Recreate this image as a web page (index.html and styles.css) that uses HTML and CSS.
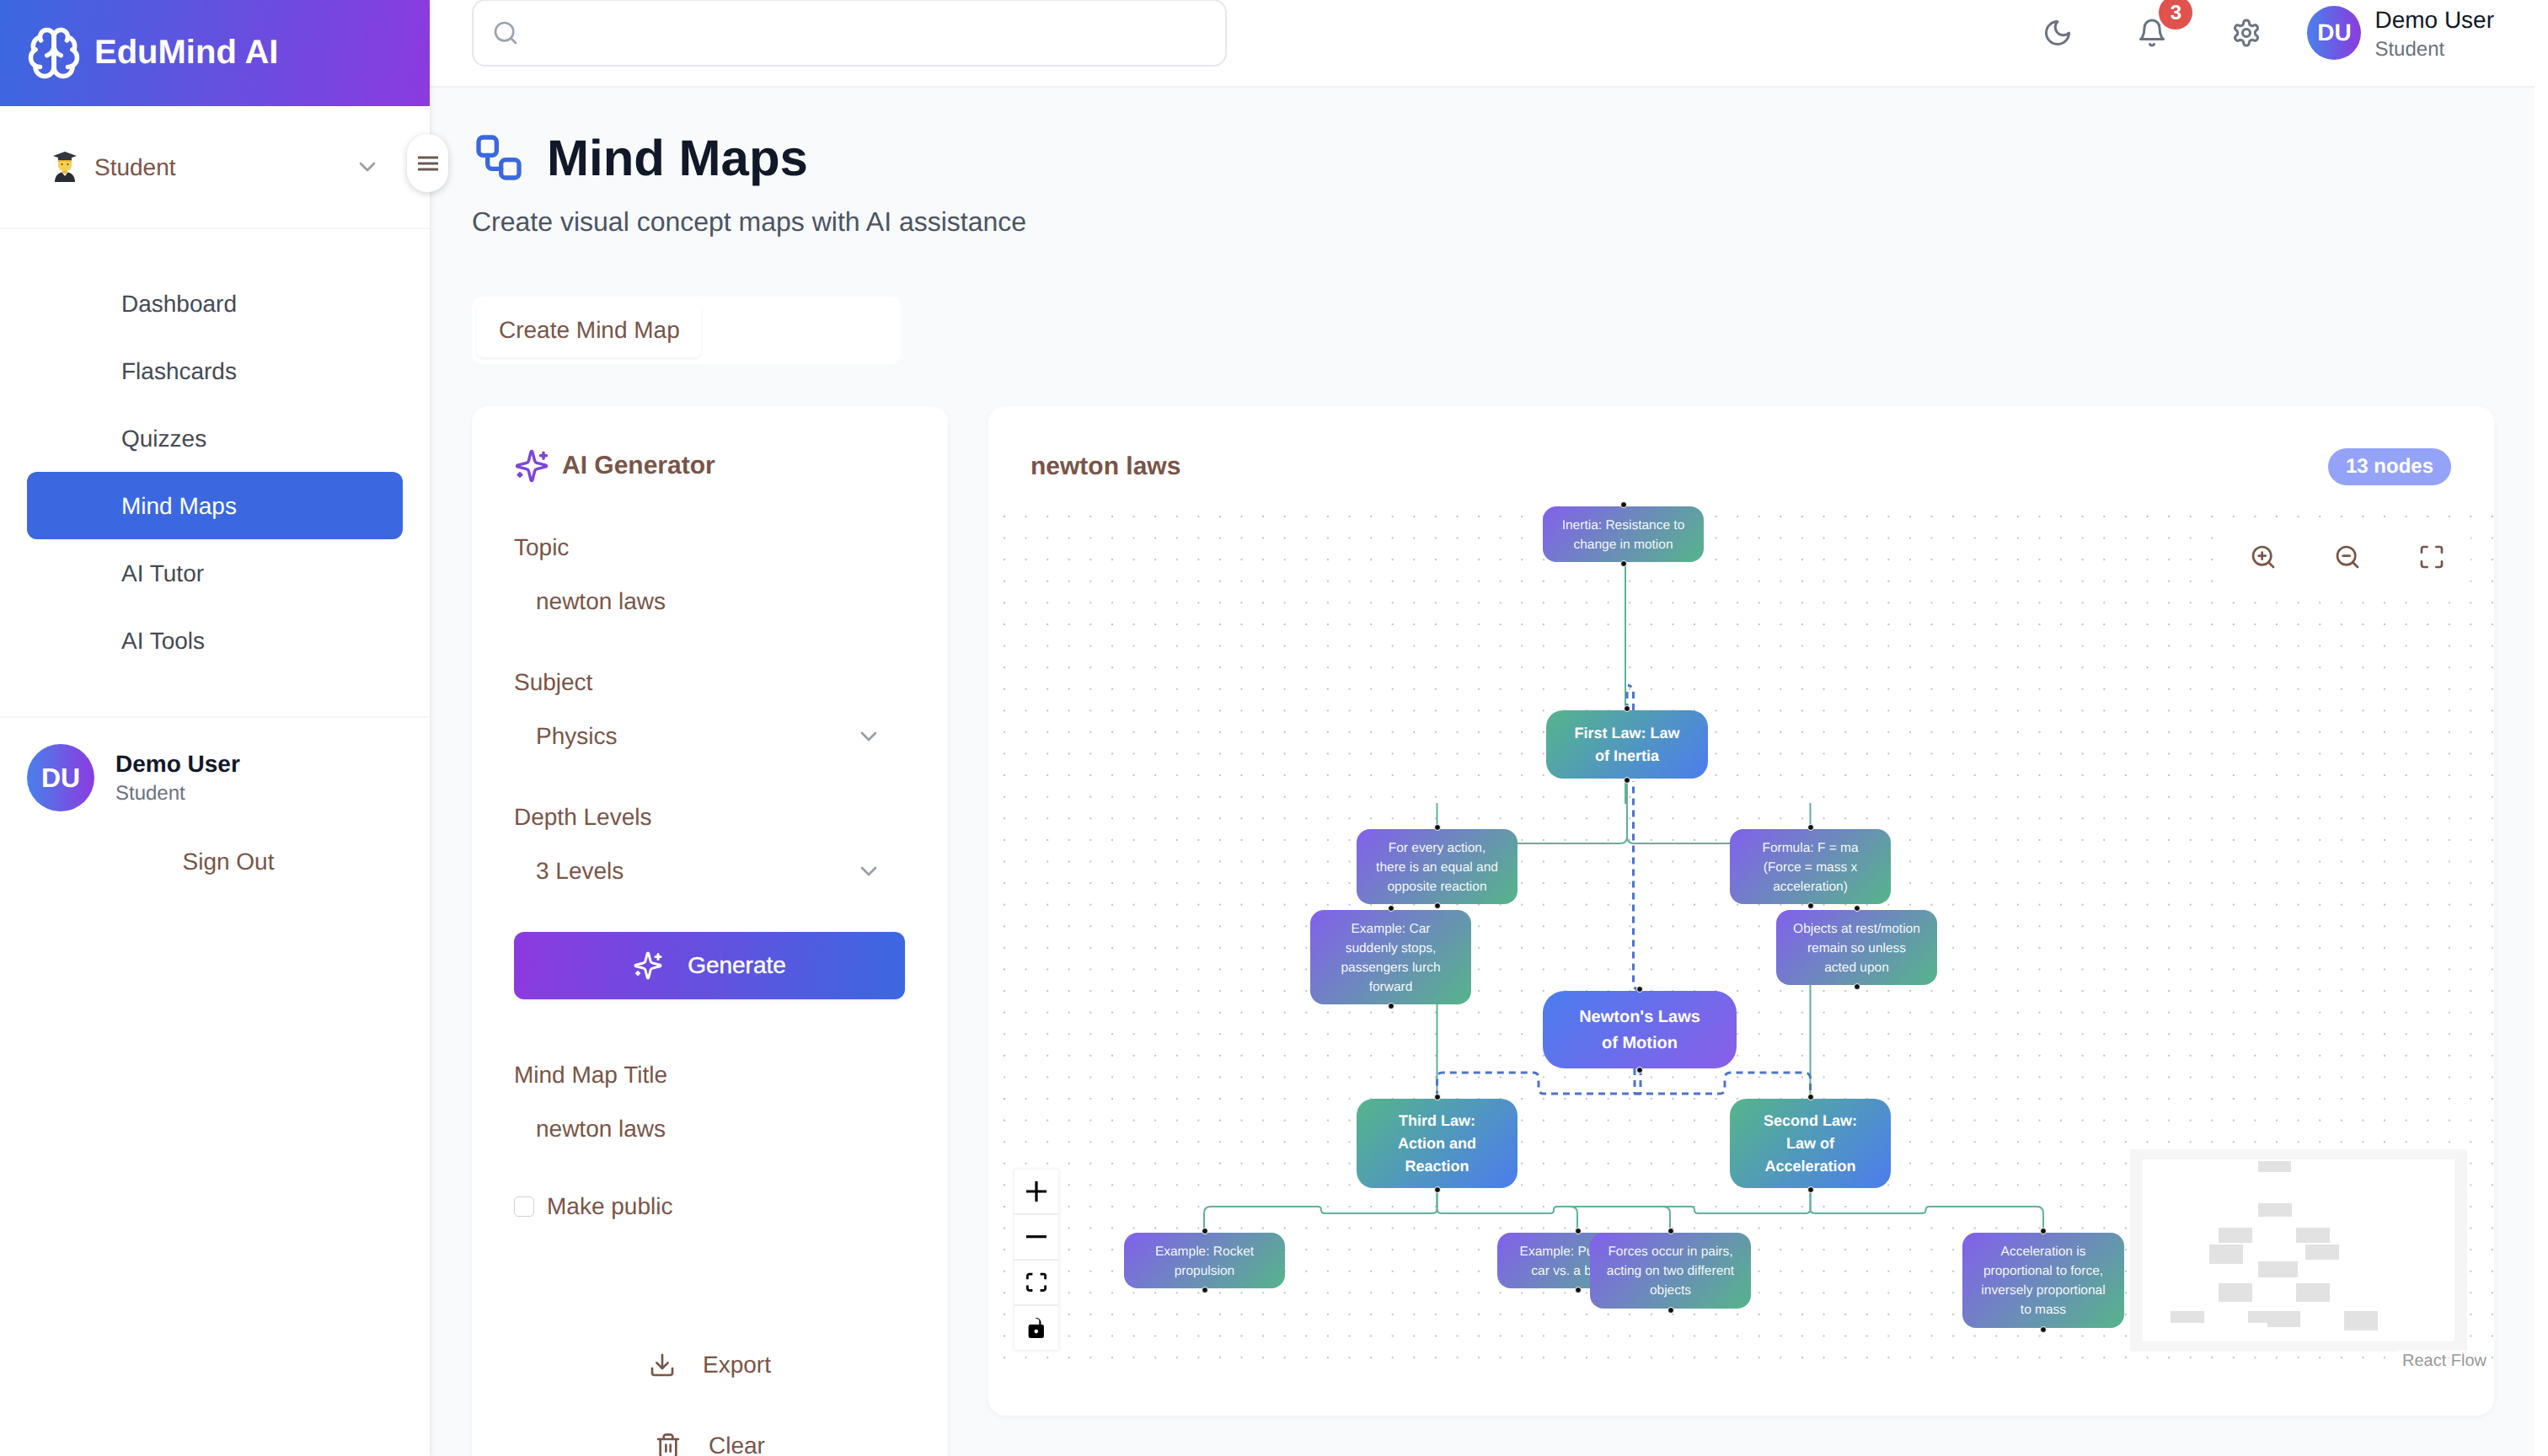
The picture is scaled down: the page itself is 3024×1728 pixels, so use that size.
FILE: index.html
```html
<!DOCTYPE html>
<html lang="en">
<head>
    <meta charset="UTF-8" />
    <title>EduMind AI – Mind Maps</title>
    <link rel="stylesheet" href="styles.css">
</head>
<body>

<svg class="sprite" width="0" height="0">
    <symbol id="i-chevron" viewBox="0 0 24 24"><path d="m6 9 6 6 6-6"/></symbol>
    <symbol id="i-sparkles" viewBox="0 0 24 24">
        <path d="M9.937 15.5A2 2 0 0 0 8.5 14.063l-6.135-1.582a.5.5 0 0 1 0-.962L8.5 9.936A2 2 0 0 0 9.937 8.5l1.582-6.135a.5.5 0 0 1 .963 0L14.063 8.5A2 2 0 0 0 15.5 9.937l6.135 1.581a.5.5 0 0 1 0 .964L15.5 14.063a2 2 0 0 0-1.437 1.437l-1.582 6.135a.5.5 0 0 1-.963 0z"/>
        <path d="M20 3v4"/><path d="M22 5h-4"/><path d="M4 17v2"/><path d="M5 18H3"/>
    </symbol>
    <symbol id="i-maximize" viewBox="0 0 24 24">
        <path d="M8 3H5a2 2 0 0 0-2 2v3"/><path d="M21 8V5a2 2 0 0 0-2-2h-3"/><path d="M3 16v3a2 2 0 0 0 2 2h3"/><path d="M16 21h3a2 2 0 0 0 2-2v-3"/>
    </symbol>
</svg>

<div class="app">
    <aside class="sidebar">
        <div class="brand">
            <svg class="icon brand-icon" viewBox="0 0 24 24">
                <path d="M12 5a3 3 0 1 0-5.997.125 4 4 0 0 0-2.526 5.77 4 4 0 0 0 .556 6.588A4 4 0 1 0 12 18Z"/>
                <path d="M12 5a3 3 0 1 1 5.997.125 4 4 0 0 1 2.526 5.77 4 4 0 0 1-.556 6.588A4 4 0 1 1 12 18Z"/>
                <path d="M15 13a4.5 4.5 0 0 1-3-4 4.5 4.5 0 0 1-3 4"/>
                <path d="M17.599 6.5a3 3 0 0 0 .399-1.375"/><path d="M6.003 5.125A3 3 0 0 0 6.401 6.5"/>
                <path d="M3.477 10.896a4 4 0 0 1 .585-.396"/><path d="M19.938 10.5a4 4 0 0 1 .585.396"/>
                <path d="M6 18a4 4 0 0 1-1.967-.516"/><path d="M19.967 17.484A4 4 0 0 1 18 18"/>
            </svg>
            <span class="brand-name">EduMind AI</span>
        </div>

        <div class="role-row">
            <svg class="role-emoji" viewBox="0 0 30 36">
                <path d="M3 36c0-8 5-12 12-12s12 4 12 12z" fill="#2a2d33"/>
                <path d="M11 24l4 5 4-5z" fill="#f4f4f4"/>
                <rect x="12" y="19" width="6" height="7" fill="#eeb53f"/>
                <path d="M7 9h16v7c0 5-4 7-8 7s-8-2-8-7z" fill="#f8cf55"/>
                <path d="M7 12c0-2 0-4 1-5h14c1 1 1 3 1 5-3-1-13-1-16 0z" fill="#e2a92e"/>
                <path d="M15 0 29 5 15 10 1 5z" fill="#33363d"/>
                <path d="M7 6h16v4H7z" fill="#33363d"/>
                <circle cx="11.5" cy="15" r="1" fill="#4a3520"/><circle cx="18.5" cy="15" r="1" fill="#4a3520"/>
            </svg>
            <span class="role-name">Student</span>
            <svg class="icon chevron role-chevron"><use href="#i-chevron"/></svg>
        </div>

        <button class="sidebar-toggle">
            <svg class="toggle-lines" viewBox="0 0 24 18"><path d="M0 2h24M0 9h24M0 16h24"/></svg>
        </button>

        <nav class="nav">
            <a class="nav-item">Dashboard</a>
            <a class="nav-item">Flashcards</a>
            <a class="nav-item">Quizzes</a>
            <a class="nav-item active">Mind Maps</a>
            <a class="nav-item">AI Tutor</a>
            <a class="nav-item">AI Tools</a>
        </nav>

        <div class="side-user">
            <div class="side-user-row">
                <div class="avatar avatar-lg">DU</div>
                <div>
                    <div class="side-user-name">Demo User</div>
                    <div class="side-user-role">Student</div>
                </div>
            </div>
            <div class="sign-out">Sign Out</div>
        </div>
    </aside>

    <div class="main">
        <header class="topbar">
            <div class="search">
                <svg class="icon search-icon" viewBox="0 0 24 24"><circle cx="11" cy="11" r="8"/><path d="m21 21-4.3-4.3"/></svg>
            </div>
            <div class="top-actions">
                <button class="top-btn">
                    <svg class="icon" viewBox="0 0 24 24"><path d="M12 3a6 6 0 0 0 9 9 9 9 0 1 1-9-9Z"/></svg>
                </button>
                <button class="top-btn">
                    <svg class="icon" viewBox="0 0 24 24"><path d="M6 8a6 6 0 0 1 12 0c0 7 3 9 3 9H3s3-2 3-9"/><path d="M10.3 21a1.94 1.94 0 0 0 3.4 0"/></svg>
                    <span class="badge">3</span>
                </button>
                <button class="top-btn">
                    <svg class="icon" viewBox="0 0 24 24"><path d="M12.22 2h-.44a2 2 0 0 0-2 2v.18a2 2 0 0 1-1 1.73l-.43.25a2 2 0 0 1-2 0l-.15-.08a2 2 0 0 0-2.73.73l-.22.38a2 2 0 0 0 .73 2.73l.15.1a2 2 0 0 1 1 1.72v.51a2 2 0 0 1-1 1.74l-.15.09a2 2 0 0 0-.73 2.73l.22.38a2 2 0 0 0 2.73.73l.15-.08a2 2 0 0 1 2 0l.43.25a2 2 0 0 1 1 1.73V20a2 2 0 0 0 2 2h.44a2 2 0 0 0 2-2v-.18a2 2 0 0 1 1-1.73l.43-.25a2 2 0 0 1 2 0l.15.08a2 2 0 0 0 2.73-.73l.22-.39a2 2 0 0 0-.73-2.73l-.15-.08a2 2 0 0 1-1-1.74v-.5a2 2 0 0 1 1-1.74l.15-.09a2 2 0 0 0 .73-2.73l-.22-.38a2 2 0 0 0-2.73-.73l-.15.08a2 2 0 0 1-2 0l-.43-.25a2 2 0 0 1-1-1.73V4a2 2 0 0 0-2-2z"/><circle cx="12" cy="12" r="3"/></svg>
                </button>
                <div class="top-user">
                    <div class="avatar avatar-md">DU</div>
                    <div>
                        <div class="top-user-name">Demo User</div>
                        <div class="top-user-role">Student</div>
                    </div>
                </div>
            </div>
        </header>

        <main class="content">
            <div class="page-title">
                <svg class="icon title-icon" viewBox="0 0 24 24"><rect width="8" height="8" x="3" y="3" rx="2"/><path d="M7 11v4a2 2 0 0 0 2 2h4"/><rect width="8" height="8" x="13" y="13" rx="2"/></svg>
                <h1>Mind Maps</h1>
            </div>
            <p class="page-sub">Create visual concept maps with AI assistance</p>

            <div class="tabs">
                <div class="tab">Create Mind Map</div>
            </div>

            <div class="columns">
                <section class="card generator">
                    <div class="gen-head">
                        <svg class="icon gen-icon"><use href="#i-sparkles"/></svg>
                        <h2>AI Generator</h2>
                    </div>

                    <label class="field-label first">Topic</label>
                    <div class="field-value">newton laws</div>

                    <label class="field-label">Subject</label>
                    <div class="field-value">Physics<svg class="icon chevron"><use href="#i-chevron"/></svg></div>

                    <label class="field-label">Depth Levels</label>
                    <div class="field-value">3 Levels<svg class="icon chevron"><use href="#i-chevron"/></svg></div>

                    <button class="generate">
                        <svg class="icon"><use href="#i-sparkles"/></svg>
                        Generate
                    </button>

                    <label class="field-label">Mind Map Title</label>
                    <div class="field-value">newton laws</div>

                    <label class="check-row"><input type="checkbox" class="check"> Make public</label>

                    <div class="action-row first-action">
                        <svg class="icon" viewBox="0 0 24 24"><path d="M21 15v4a2 2 0 0 1-2 2H5a2 2 0 0 1-2-2v-4"/><polyline points="7 10 12 15 17 10"/><line x1="12" x2="12" y1="15" y2="3"/></svg>
                        Export
                    </div>
                    <div class="action-row">
                        <svg class="icon" viewBox="0 0 24 24"><path d="M3 6h18"/><path d="M19 6v14c0 1-1 2-2 2H7c-1 0-2-1-2-2V6"/><path d="M8 6V4c0-1 1-2 2-2h4c1 0 2 1 2 2v2"/><line x1="10" x2="10" y1="11" y2="17"/><line x1="14" x2="14" y1="11" y2="17"/></svg>
                        Clear
                    </div>
                </section>

                <section class="card map-card">
                    <div class="map-head">
                        <h2>newton laws</h2>
                        <span class="count">13 nodes</span>
                    </div>

                    <div class="canvas">
                        <!-- edges use page coordinates, hence the viewBox -->
                        <svg class="edges" viewBox="1190 600 1770 1032">
                            <g class="edge-green">
                                <path d="M1929 668V843"/>
                                <path d="M1931 923V993Q1931 1001 1923 1001H1801"/>
                                <path d="M1931 923V993Q1931 1001 1939 1001H2053"/>
                                <path d="M1929 927V954"/>
                                <path d="M1705.5 953V984"/>
                                <path d="M2148.5 953V984"/>
                                <path d="M1705.5 1192V1304"/>
                                <path d="M2148.5 1169V1304"/>
                                <path d="M1705.5 1411V1435Q1705.5 1440 1700 1440H1572Q1568 1440 1568 1436T1564 1432H1437Q1429 1432 1429 1440V1463"/>
                                <path d="M1705.5 1411V1435Q1705.5 1440 1711 1440H1840Q1844 1440 1844 1436T1848 1432H1974Q1982 1432 1982 1440V1463"/>
                                <path d="M1848 1432H1864Q1872 1432 1872 1440V1463"/>
                                <path d="M2148.5 1411V1435Q2148.5 1440 2143 1440H2015Q2011 1440 2011 1436T2007 1432H1974"/>
                                <path d="M2148.5 1411V1435Q2148.5 1440 2154 1440H2281Q2285.5 1440 2285.5 1436T2290 1432H2417Q2425 1432 2425 1440V1463"/>
                            </g>
                            <g class="edge-blue">
                                <path d="M1946 1176Q1938.5 1174 1938.5 1166V927"/>
                                <path d="M1938.5 843V822Q1938.5 815 1932 813"/>
                                <path d="M1931 843V817"/>
                                <path d="M1940 1268V1298"/>
                                <path d="M1947 1268V1298"/>
                                <path d="M1947 1298H1832Q1826 1298 1826 1292V1280Q1826 1273 1820 1273H1712Q1705.5 1273 1705.5 1280V1304"/>
                                <path d="M1940 1298H2041Q2047 1298 2047 1292V1280Q2047 1273 2054 1273H2141Q2148.5 1273 2148.5 1280V1304"/>
                            </g>
                        </svg>

                        <div class="node leaf n-inertia"><span>Inertia: Resistance to<br>change in motion</span></div>
                        <div class="node law n-first"><span>First Law: Law<br>of Inertia</span></div>
                        <div class="node leaf n-every"><span>For every action,<br>there is an equal and<br>opposite reaction</span></div>
                        <div class="node leaf n-formula"><span>Formula: F = ma<br>(Force = mass x<br>acceleration)</span></div>
                        <div class="node leaf n-car"><span>Example: Car<br>suddenly stops,<br>passengers lurch<br>forward</span></div>
                        <div class="node leaf n-objects"><span>Objects at rest/motion<br>remain so unless<br>acted upon</span></div>
                        <div class="node root n-newton"><span>Newton's Laws<br>of Motion</span></div>
                        <div class="node law n-third"><span>Third Law:<br>Action and<br>Reaction</span></div>
                        <div class="node law n-second"><span>Second Law:<br>Law of<br>Acceleration</span></div>
                        <div class="node leaf n-rocket"><span>Example: Rocket<br>propulsion</span></div>
                        <div class="node leaf n-pushing"><span>Example: Pushing a<br>car vs. a bicycle</span></div>
                        <div class="node leaf n-forces"><span>Forces occur in pairs,<br>acting on two different<br>objects</span></div>
                        <div class="node leaf n-accel"><span>Acceleration is<br>proportional to force,<br>inversely proportional<br>to mass</span></div>

                        <div class="map-tools">
                            <button class="map-tool"><svg class="icon" viewBox="0 0 24 24"><circle cx="11" cy="11" r="8"/><line x1="21" x2="16.65" y1="21" y2="16.65"/><line x1="11" x2="11" y1="8" y2="14"/><line x1="8" x2="14" y1="11" y2="11"/></svg></button>
                            <button class="map-tool"><svg class="icon" viewBox="0 0 24 24"><circle cx="11" cy="11" r="8"/><line x1="21" x2="16.65" y1="21" y2="16.65"/><line x1="8" x2="14" y1="11" y2="11"/></svg></button>
                            <button class="map-tool"><svg class="icon"><use href="#i-maximize"/></svg></button>
                        </div>

                        <div class="controls">
                            <button class="control"><svg viewBox="0 0 32 32"><path d="M32 18.133H18.133V32h-4.266V18.133H0v-4.266h13.867V0h4.266v13.867H32z"/></svg></button>
                            <button class="control"><svg viewBox="0 0 32 5"><path d="M0 0h32v4.2H0z"/></svg></button>
                            <button class="control"><svg viewBox="0 0 32 30"><path d="M3.692 4.63c0-.53.4-.938.939-.938h5.215V0H4.708C2.13 0 0 2.054 0 4.63v5.216h3.692V4.631zM27.354 0h-5.2v3.692h5.17c.53 0 .984.4.984.939v5.215H32V4.631A4.624 4.624 0 0027.354 0zm.954 24.83c0 .532-.4.94-.939.94h-5.215v3.768h5.215c2.577 0 4.631-2.13 4.631-4.707v-5.139h-3.692v5.139zm-23.677.94c-.531 0-.939-.4-.939-.94v-5.138H0v5.139c0 2.577 2.13 4.707 4.708 4.707h5.138V25.77H4.631z"/></svg></button>
                            <button class="control"><svg viewBox="0 0 25 32"><path d="M21.333 10.667H19.81V7.619C19.81 3.429 16.38 0 12.19 0c-4.114 0 1.828 1.37 3.505 2.438 1.676 1.067 1.22 2.59 1.22 5.181v3.048H3.047A3.056 3.056 0 000 13.714v15.238A3.056 3.056 0 003.048 32h18.285a3.056 3.056 0 003.048-3.048V13.714a3.056 3.056 0 00-3.048-3.047zM12.19 24.533a3.056 3.056 0 01-3.047-3.047 3.056 3.056 0 013.047-3.048 3.056 3.056 0 013.048 3.048 3.056 3.056 0 01-3.048 3.047z"/></svg></button>
                        </div>

                        <svg class="minimap" viewBox="2528 1364 400 240">
                            <rect class="mini-mask" x="2528" y="1364" width="400" height="240"/>
                            <rect class="mini-view" x="2543" y="1376" width="370" height="216"/>
                            <g class="mini-nodes">
                                <rect x="2680" y="1378" width="39" height="13"/>
                                <rect x="2680" y="1428" width="40" height="16"/>
                                <rect x="2633" y="1457" width="40" height="18"/>
                                <rect x="2725" y="1457" width="40" height="18"/>
                                <rect x="2622" y="1477" width="40" height="23"/>
                                <rect x="2736" y="1477" width="40" height="18"/>
                                <rect x="2680" y="1497" width="47" height="19"/>
                                <rect x="2633" y="1523" width="40" height="22"/>
                                <rect x="2725" y="1523" width="40" height="22"/>
                                <rect x="2576" y="1556" width="40" height="14"/>
                                <rect x="2668" y="1556" width="40" height="14"/>
                                <rect x="2691" y="1556" width="39" height="19"/>
                                <rect x="2782" y="1556" width="40" height="23"/>
                            </g>
                        </svg>

                        <div class="attribution">React Flow</div>
                    </div>
                </section>
            </div>
        </main>
    </div>

    <div class="scroll-track"></div>
</div>

</body>
</html>
```

FILE: styles.css
```css
/* PAGE */
html, body {
    margin: 0;
    padding: 0;
    height: 1728px;
    overflow: hidden;
    font-family: 'Liberation Sans', Arial, sans-serif;
    text-rendering: geometricPrecision;
    color: #795548;
    background: #fff;
}

.sprite {
    position: absolute;
}

button {
    font-family: inherit;
    border: none;
    padding: 0;
    background: none;
}

h1, h2, p {
    margin: 0;
}

.app {
    display: flex;
    height: 1728px;
}

.icon {
    fill: none;
    stroke: currentColor;
    stroke-width: 2;
    stroke-linecap: round;
    stroke-linejoin: round;
}

.avatar {
    display: flex;
    align-items: center;
    justify-content: center;
    flex: none;
    border-radius: 50%;
    color: #fff;
    font-weight: bold;
    background: linear-gradient(90deg, #4a80ea, #8a3be0);
}

/* SIDEBAR */
.sidebar {
    position: relative;
    flex: none;
    width: 510px;
    background: #fff;
    box-shadow: 2px 0 6px rgba(0,0,0,0.07);
    z-index: 2;
}

.brand {
    display: flex;
    align-items: center;
    gap: 15px;
    height: 126px;
    padding-left: 31px;
    box-sizing: border-box;
    color: #fff;
    background: linear-gradient(100deg, #3b68e0, #8c3ae0);
}

.brand-icon {
    width: 66px;
    height: 66px;
}

.brand-name {
    font-size: 40px;
    font-weight: bold;
    margin-bottom: 2px;
}

.role-row {
    display: flex;
    align-items: center;
    height: 144px;
    padding-left: 62px;
    border-bottom: 2px solid #f3f4f6;
    font-size: 28px;
}

.role-emoji {
    width: 30px;
    height: 36px;
    margin-right: 20px;
}

.role-name {
    padding-top: 1px;
}

.role-chevron {
    margin-left: 211px;
}

.chevron {
    width: 32px;
    height: 32px;
    color: #9a9ea6;
}

.sidebar-toggle {
    position: absolute;
    left: 483px;
    top: 159px;
    width: 49px;
    height: 69px;
    border-radius: 25px;
    background: #fff;
    box-shadow: 0 2px 8px rgba(0,0,0,0.18);
}

.toggle-lines {
    width: 24px;
    height: 18px;
    stroke: #6d5a50;
    stroke-width: 3;
    display: block;
    margin: 0 auto;
}

.nav {
    padding: 48px 32px 50px;
}

.nav-item {
    display: flex;
    align-items: center;
    height: 79px;
    padding: 1px 0 0 112px;
    border-radius: 12px;
    font-size: 28px;
    color: #454a54;
}

.nav-item.active {
    color: #fff;
    background: #3b68e0;
}

.side-user {
    border-top: 2px solid #f3f4f6;
    padding: 31px 32px 0;
}

.side-user-row {
    display: flex;
    align-items: center;
    gap: 25px;
}

.avatar-lg {
    width: 80px;
    height: 80px;
    font-size: 32px;
}

.side-user-name {
    font-size: 28px;
    font-weight: bold;
    line-height: 38px;
    color: #111827;
}

.side-user-role {
    font-size: 24px;
    line-height: 32px;
    color: #6b7280;
}

.sign-out {
    margin-top: 40px;
    padding-left: 32px;
    font-size: 28px;
    line-height: 40px;
    text-align: center;
}

/* TOP BAR */
.main {
    flex: 1;
    min-width: 0;
    background: #f9fafb;
}

.topbar {
    display: flex;
    align-items: flex-start;
    height: 104px;
    box-sizing: border-box;
    padding: 0 48px 0 50px;
    background: #fff;
    border-bottom: 2px solid #f0f1f3;
}

.search {
    display: flex;
    align-items: center;
    width: 896px;
    height: 80px;
    margin-top: -1px;
    padding-left: 22px;
    box-sizing: border-box;
    border: 2px solid #e5e7eb;
    border-radius: 16px;
    color: #9ca3af;
}

.search-icon {
    width: 32px;
    height: 32px;
}

.top-actions {
    display: flex;
    align-items: center;
    margin-left: auto;
    height: 78px;
}

.top-btn {
    position: relative;
    width: 112px;
    height: 78px;
    color: #6b7280;
    display: flex;
    align-items: center;
    justify-content: center;
}

.top-btn .icon {
    width: 36px;
    height: 36px;
}

.badge {
    position: absolute;
    left: 64px;
    top: -5px;
    width: 40px;
    height: 40px;
    border-radius: 50%;
    background: #e0524d;
    color: #fff;
    font-size: 24px;
    font-weight: bold;
    line-height: 40px;
    text-align: center;
}

.top-user {
    display: flex;
    align-items: center;
    gap: 16px;
    margin-left: 16px;
}

.avatar-md {
    width: 64px;
    height: 64px;
    font-size: 28px;
}

.top-user-name {
    font-size: 28px;
    line-height: 36px;
    padding-top: 2px;
    color: #111827;
}

.top-user-role {
    font-size: 24px;
    line-height: 32px;
    padding-top: 1px;
    color: #6b7280;
}

/* PAGE HEADING */
.content {
    padding: 47px 48px 0 50px;
}

.page-title {
    display: flex;
    align-items: center;
    gap: 25px;
    height: 72px;
}

.title-icon {
    width: 64px;
    height: 64px;
    color: #3b68e0;
}

h1 {
    font-size: 60px;
    font-weight: bold;
    color: #111827;
}

.page-sub {
    margin: 16px 0 65px;
    font-size: 32px;
    line-height: 48px;
    color: #4b5563;
}

.tabs {
    width: 509px;
    height: 80px;
    box-sizing: border-box;
    padding: 8px 6px;
    margin-bottom: 50px;
    background: #fff;
    border-radius: 12px;
}

.tab {
    display: inline-flex;
    align-items: center;
    height: 64px;
    padding: 0 25px 0 26px;
    font-size: 28px;
    border-radius: 8px;
    background: #fff;
    box-shadow: 0 2px 4px rgba(0,0,0,0.06);
}

/* CARDS */
.columns {
    display: grid;
    grid-template-columns: 565px 1787px;
    gap: 48px;
    align-items: start;
}

.card {
    background: #fff;
    border-radius: 20px;
    box-shadow: 0 2px 6px rgba(0,0,0,0.04);
}

.generator {
    padding: 50px 50px 60px 50px;
}

.gen-head {
    display: flex;
    align-items: center;
    gap: 15px;
    height: 42px;
}

.gen-icon {
    width: 42px;
    height: 42px;
    color: #7c45d8;
}

.generator h2, .map-head h2 {
    font-size: 30px;
    font-weight: bold;
    color: #795548;
}

.field-label {
    display: block;
    font-size: 28px;
    line-height: 40px;
    margin-bottom: 10px;
}

.field-label.first {
    margin-top: 56px;
}

.field-value {
    display: flex;
    align-items: center;
    justify-content: space-between;
    height: 68px;
    padding: 0 28px 0 26px;
    margin-bottom: 42px;
    font-size: 28px;
}

.generate {
    display: flex;
    align-items: center;
    justify-content: center;
    gap: 29px;
    width: 464px;
    height: 80px;
    margin: -4px 0 70px;
    border-radius: 12px;
    color: #fff;
    font-size: 28px;
    -webkit-text-stroke: 0.4px #fff;
    background: linear-gradient(95deg, #8c3ae0, #3b68e0);
    box-shadow: 0 2px 6px rgba(0,0,0,0.06);
}

.generate .icon {
    width: 36px;
    height: 36px;
}

.check-row {
    display: flex;
    align-items: center;
    gap: 15px;
    height: 40px;
    margin-top: -4px;
    font-size: 28px;
}

.check {
    appearance: none;
    width: 24px;
    height: 24px;
    margin: 0;
    background: #fff;
    border: 1.5px solid #cfd2d6;
    border-radius: 5px;
}

.action-row {
    display: flex;
    align-items: center;
    justify-content: center;
    gap: 32px;
    height: 80px;
    margin-top: 16px;
    font-size: 28px;
}

.action-row.first-action {
    margin-top: 128px;
}

.action-row .icon {
    width: 32px;
    height: 32px;
}

/* MIND MAP CARD */
.map-card {
    height: 1198px;
}

.map-head {
    display: flex;
    align-items: center;
    justify-content: space-between;
    height: 44px;
    padding: 50px 51px 24px 50px;
}

.count {
    display: flex;
    align-items: center;
    height: 44px;
    padding: 0 21px;
    border-radius: 22px;
    background: #94a3f8;
    color: #fff;
    font-size: 24px;
    font-weight: bold;
}

.canvas {
    position: relative;
    width: 1770px;
    height: 1032px;
    margin-left: 17px;
    background-image: radial-gradient(circle, #c2c2c2 0.9px, transparent 1.2px);
    background-size: 25.6px 25.6px;
    background-position: -10.8px 0.2px;
}

.edges {
    position: absolute;
    left: 0;
    top: 0;
    width: 1770px;
    height: 1032px;
    overflow: visible;
    fill: none;
}

.edge-green {
    stroke: #62b193;
    stroke-width: 2;
}

.edge-blue {
    stroke: #4f74c9;
    stroke-width: 3;
    stroke-dasharray: 8 6;
}

.node {
    position: absolute;
    display: flex;
    align-items: center;
    justify-content: center;
    box-sizing: border-box;
    width: 191px;
    padding: 1px 10px 0;
    text-align: center;
    white-space: nowrap;
    color: #fff;
    border-radius: 16px;
}

/* connection handles */
.node::before, .node::after {
    content: '';
    position: absolute;
    left: 50%;
    width: 8px;
    height: 8px;
    margin-left: -4px;
    border-radius: 50%;
    background: #111;
    border: 1px solid #fff;
    box-sizing: border-box;
}

.node::before {
    top: -6px;
}

.node::after {
    bottom: -6px;
}

.leaf {
    font-size: 15.5px;
    line-height: 23px;
    color: rgba(255,255,255,0.94);
    background: linear-gradient(135deg, #8260ec, #55b58a);
}

.law {
    font-size: 18px;
    line-height: 27px;
    font-weight: bold;
    border-radius: 20px;
    background: linear-gradient(135deg, #55b58a, #4c7cef);
}

.root {
    width: 230px;
    font-size: 20px;
    line-height: 31px;
    font-weight: bold;
    border-radius: 26px;
    background: linear-gradient(135deg, #4c7cef, #8a5ee8);
}

.n-inertia { left: 641px; top: 1px; height: 66px; }
.n-first { left: 645px; top: 243px; width: 192px; height: 81px; }
.n-every { left: 420px; top: 384px; height: 89px; }
.n-formula { left: 863px; top: 384px; height: 89px; }
.n-car { left: 365px; top: 480px; height: 112px; }
.n-objects { left: 918px; top: 480px; height: 89px; }
.n-newton { left: 641px; top: 576px; height: 92px; }
.n-third { left: 420px; top: 704px; height: 106px; }
.n-second { left: 863px; top: 704px; height: 106px; }
.n-rocket { left: 144px; top: 863px; height: 66px; }
.n-pushing { left: 587px; top: 863px; height: 66px; }
.n-forces { left: 697px; top: 863px; height: 90px; }
.n-accel { left: 1139px; top: 863px; width: 192px; height: 113px; }

.map-tools {
    position: absolute;
    right: 28px;
    top: 25px;
    display: flex;
    gap: 8px;
}

.map-tool {
    display: flex;
    align-items: center;
    justify-content: center;
    width: 92px;
    height: 72px;
    background: #fff;
    border-radius: 10px;
    color: #795548;
}

.map-tool .icon {
    width: 32px;
    height: 32px;
}

.controls {
    position: absolute;
    left: 14px;
    top: 788px;
    width: 52px;
    box-shadow: 0 0 4px 1px rgba(0,0,0,0.08);
}

.control {
    display: flex;
    align-items: center;
    justify-content: center;
    width: 52px;
    height: 52px;
    box-sizing: content-box;
    background: #fff;
    border-bottom: 2px solid #eee;
}

.control:last-child {
    border-bottom: none;
}

.control svg {
    width: 24px;
    height: 24px;
    fill: #000;
}

.minimap {
    position: absolute;
    left: 1338px;
    top: 764px;
    width: 400px;
    height: 240px;
}

.mini-mask {
    fill: #f5f5f5;
}

.mini-view {
    fill: #fff;
}

.mini-nodes {
    fill: #e2e2e2;
}

.attribution {
    position: absolute;
    right: 9px;
    bottom: 4px;
    padding-left: 6px;
    font-size: 20px;
    line-height: 26px;
    color: #999;
    background: rgba(255,255,255,0.5);
}

.scroll-track {
    flex: none;
    width: 16px;
    background: #fff;
}
```
